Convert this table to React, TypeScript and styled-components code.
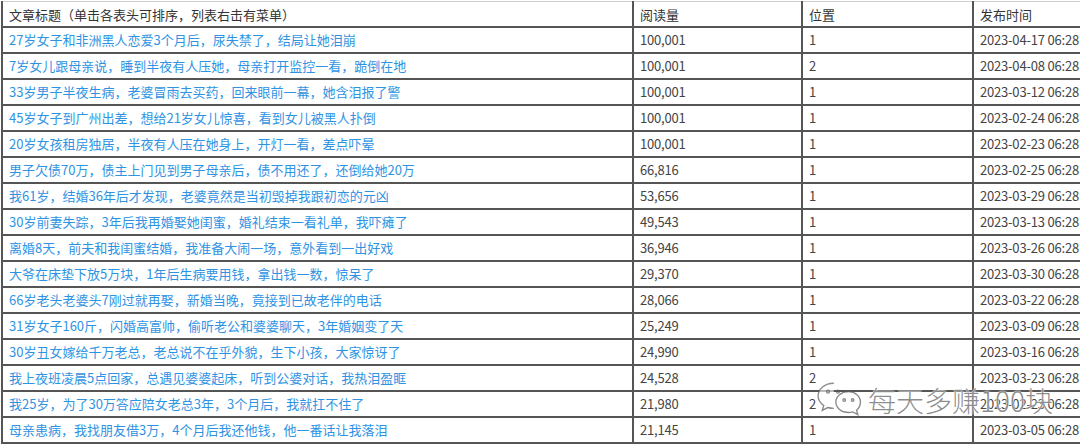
import React from "react";
import styled, { createGlobalStyle } from "styled-components";

const Global = createGlobalStyle`
  html, body { margin: 0; padding: 0; background: #fff; overflow: hidden; }
  body { width: 1080px; height: 446px; }
`;

const Page = styled.div`
  position: relative;
  width: 1080px;
  height: 446px;
  overflow: hidden;
  background: #fff;
  font-family: "Noto Sans CJK SC", "Noto Sans", sans-serif;
`;

const Table = styled.table`
  margin: 1px 0 0 1px;
  border-collapse: collapse;
  table-layout: fixed;
  width: 1130px;
  font-size: 13px;
`;

const Col = styled.col<{ $w: number }>`
  width: ${(p) => p.$w}px;
`;

const HeadCell = styled.th`
  height: 24px;
  padding: 0 0 0 6px;
  text-align: left;
  font-weight: normal;
  color: #333;
  border-top: 1px solid #cfcfcf;
  border-left: 2px solid #555;
  border-bottom: 2px solid #555;
  white-space: nowrap;
  overflow: hidden;
`;

const Cell = styled.td<{ $link?: boolean }>`
  height: 24px;
  padding: 0 0 0 6px;
  color: ${(p) => (p.$link ? "#2f93e3" : "#444")};
  letter-spacing: ${(p) => (p.$link ? "0" : "-0.2px")};
  border-left: 2px solid #555;
  border-bottom: 2px solid #555;
  white-space: nowrap;
  overflow: hidden;
  line-height: 24px;
`;

const Watermark = styled.div`
  position: absolute;
  left: 816px;
  top: 380px;
  display: flex;
  align-items: center;
  gap: 6px;
  pointer-events: none;
`;

const MarkText = styled.span`
  font-family: "Noto Sans CJK SC", sans-serif;
  font-weight: 300;
  font-size: 28px;
  color: rgba(90, 90, 90, 0.7);
  text-shadow: 0 0 2px #fff, 0 0 1px #fff;
`;

const rows: [string, string, string, string][] = [
  ["27岁女子和非洲黑人恋爱3个月后，尿失禁了，结局让她泪崩", "100,001", "1", "2023-04-17 06:28"],
  ["7岁女儿跟母亲说，睡到半夜有人压她，母亲打开监控一看，跪倒在地", "100,001", "2", "2023-04-08 06:28"],
  ["33岁男子半夜生病，老婆冒雨去买药，回来眼前一幕，她含泪报了警", "100,001", "1", "2023-03-12 06:28"],
  ["45岁女子到广州出差，想给21岁女儿惊喜，看到女儿被黑人扑倒", "100,001", "1", "2023-02-24 06:28"],
  ["20岁女孩租房独居，半夜有人压在她身上，开灯一看，差点吓晕", "100,001", "1", "2023-02-23 06:28"],
  ["男子欠债70万，债主上门见到男子母亲后，债不用还了，还倒给她20万", "66,816", "1", "2023-02-25 06:28"],
  ["我61岁，结婚36年后才发现，老婆竟然是当初毁掉我跟初恋的元凶", "53,656", "1", "2023-03-29 06:28"],
  ["30岁前妻失踪，3年后我再婚娶她闺蜜，婚礼结束一看礼单，我吓瘫了", "49,543", "1", "2023-03-13 06:28"],
  ["离婚8天，前夫和我闺蜜结婚，我准备大闹一场，意外看到一出好戏", "36,946", "1", "2023-03-26 06:28"],
  ["大爷在床垫下放5万块，1年后生病要用钱，拿出钱一数，惊呆了", "29,370", "1", "2023-03-30 06:28"],
  ["66岁老头老婆头7刚过就再娶，新婚当晚，竟接到已故老伴的电话", "28,066", "1", "2023-03-22 06:28"],
  ["31岁女子160斤，闪婚高富帅，偷听老公和婆婆聊天，3年婚姻变了天", "25,249", "1", "2023-03-09 06:28"],
  ["30岁丑女嫁给千万老总，老总说不在乎外貌，生下小孩，大家惊讶了", "24,990", "1", "2023-03-16 06:28"],
  ["我上夜班凌晨5点回家，总遇见婆婆起床，听到公婆对话，我热泪盈眶", "24,528", "2", "2023-03-23 06:28"],
  ["我25岁，为了30万答应陪女老总3年，3个月后，我就扛不住了", "21,980", "2", "2023-02-23 06:28"],
  ["母亲患病，我找朋友借3万，4个月后我还他钱，他一番话让我落泪", "21,145", "1", "2023-03-05 06:28"],
];

const WeChatIcon = () => (
  <svg width="46" height="40" viewBox="0 0 44 38" fill="none" stroke="rgba(90,90,90,0.7)" strokeWidth="1.3">
    <path d="M17 3C8.5 3 2 8.3 2 15c0 3.8 2.1 7 5.4 9.3L6 29l5.2-2.8c1.8.5 3.7.8 5.8.8" fill="rgba(255,255,255,0.6)" />
    <path d="M31 11c-6.8 0-12 4.5-12 10s5.2 10 12 10c1.5 0 2.9-.2 4.2-.6L40 33l-1.2-4.2C41 27 42.5 24.2 42.5 21c0-5.5-5-10-11.5-10z" fill="rgba(255,255,255,0.6)" />
    <circle cx="11.5" cy="11" r="1.4" />
    <circle cx="21" cy="11" r="1.4" />
    <circle cx="27" cy="19" r="1.2" />
    <circle cx="35" cy="19" r="1.2" />
  </svg>
);

export default function App() {
  return (
    <Page>
      <Global />
      <Table>
        <colgroup>
          <Col $w={631} />
          <Col $w={169} />
          <Col $w={171} />
          <Col $w={159} />
        </colgroup>
        <thead>
          <tr>
            <HeadCell>文章标题（单击各表头可排序，列表右击有菜单）</HeadCell>
            <HeadCell>阅读量</HeadCell>
            <HeadCell>位置</HeadCell>
            <HeadCell>发布时间</HeadCell>
          </tr>
        </thead>
        <tbody>
          {rows.map((r, i) => (
            <tr key={i}>
              <Cell $link>{r[0]}</Cell>
              <Cell>{r[1]}</Cell>
              <Cell>{r[2]}</Cell>
              <Cell>{r[3]}</Cell>
            </tr>
          ))}
        </tbody>
      </Table>
      <Watermark>
        <WeChatIcon />
        <MarkText>每天多赚100块</MarkText>
      </Watermark>
    </Page>
  );
}
